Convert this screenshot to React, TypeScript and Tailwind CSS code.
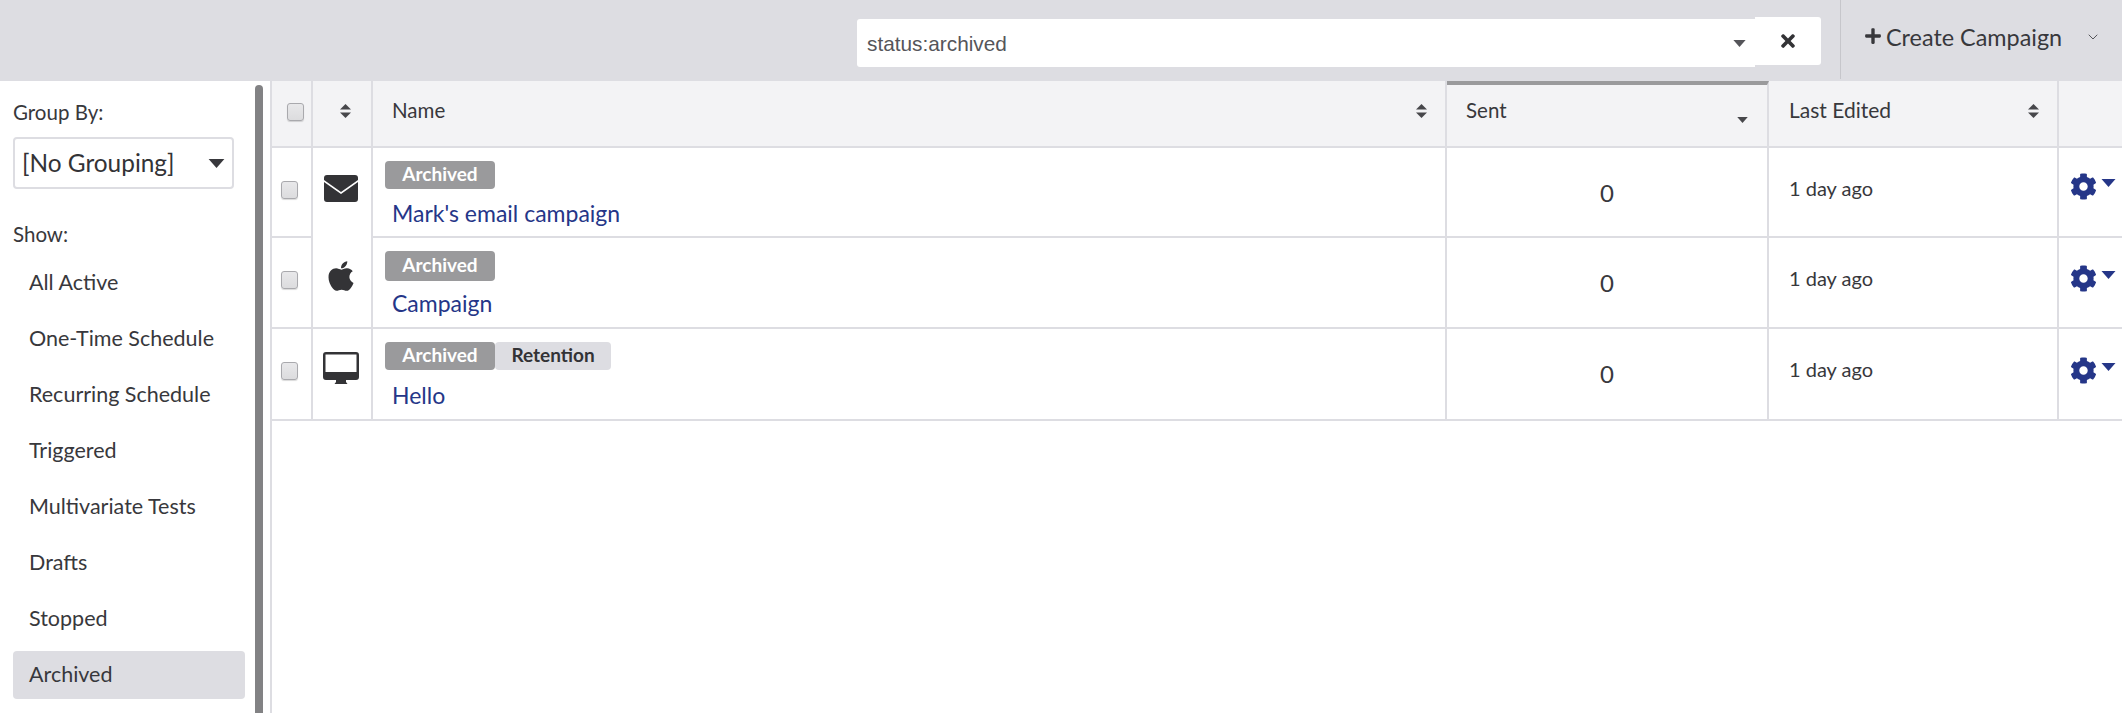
import { FaApple, FaCog, FaPlus, FaTimes } from "react-icons/fa";
import { FiChevronDown } from "react-icons/fi";
import type { ReactNode } from "react";

const navItems = [
  "All Active",
  "One-Time Schedule",
  "Recurring Schedule",
  "Triggered",
  "Multivariate Tests",
  "Drafts",
  "Stopped",
  "Archived",
];

function Envelope() {
  return (
    <svg viewBox="0 0 34 27" className="w-[34px] h-[27px]" fill="#333336">
      <path d="M3 0h28a3 3 0 0 1 3 3v2L17 17 0 5V3a3 3 0 0 1 3-3z" />
      <path d="M0 7l17 12L34 7v17a3 3 0 0 1-3 3H3a3 3 0 0 1-3-3z" />
    </svg>
  );
}

function Monitor() {
  return (
    <svg viewBox="0 0 36 32" className="w-[36px] h-[32px]" fill="#333336">
      <path
        fillRule="evenodd"
        d="M3 0h30a3 3 0 0 1 3 3v22a3 3 0 0 1-3 3H3a3 3 0 0 1-3-3V3a3 3 0 0 1 3-3zm-.5 2.500v17.500h31V2.500z"
      />
      <path d="M13 28h10v2l1.500 2h-13l1.500-2z" />
    </svg>
  );
}

function SortIcon() {
  return (
    <svg viewBox="0 0 11 14" className="w-[11px] h-[14px]" fill="#47474b">
      <path d="M5.500 0L11 5.500H0z" />
      <path d="M0 8.500h11L5.500 14z" />
    </svg>
  );
}

function Caret({ className }: { className: string }) {
  return (
    <svg viewBox="0 0 14 8" className={className} fill="currentColor">
      <path d="M0 0h14L7 8z" />
    </svg>
  );
}

function Checkbox() {
  return (
    <div className="w-[17px] h-[18px] rounded-[3px] border border-[#a9a9ad] bg-gradient-to-b from-[#e8e8ea] to-[#dcdcde] shadow-[0_1px_1px_rgba(0,0,0,0.15)]" />
  );
}

function Badge({ dark, children }: { dark?: boolean; children: ReactNode }) {
  return (
    <span
      className={`flex items-center justify-center rounded-[4px] h-full pb-[2px] text-[19px] font-bold ${
        dark ? "w-[110px] bg-[#9a9a9c] text-white" : "w-[116px] bg-[#dddde2] text-[#333336]"
      }`}
    >
      {children}
    </span>
  );
}

const rows = [
  {
    name: "Mark's email campaign",
    icon: <Envelope />,
    iconPad: "pt-[27px]",
    height: "h-[90px]",
    badgeHeight: "h-[28px]",
    linkGap: "mt-[10px]",
    gearPad: "pt-[25px]",
    openIcon: true,
    tags: false,
  },
  {
    name: "Campaign",
    icon: <FaApple className="w-[34px] h-[34px] text-[#333336]" />,
    iconPad: "pt-[21px]",
    height: "h-[91px]",
    badgeHeight: "h-[30px]",
    linkGap: "mt-[8px]",
    gearPad: "pt-[27px]",
    openIcon: false,
    tags: false,
  },
  {
    name: "Hello",
    icon: <Monitor />,
    iconPad: "pt-[23px]",
    height: "h-[92px]",
    badgeHeight: "h-[28px]",
    linkGap: "mt-[11px]",
    gearPad: "pt-[28px]",
    openIcon: false,
    tags: true,
  },
];

export default function App() {
  return (
    <div className="h-[713px] w-[2122px] overflow-hidden bg-white text-[#38383c] font-['Lato',sans-serif] flex flex-col">
      {/* Top bar */}
      <div className="h-[81px] shrink-0 bg-[#dddde2] flex justify-end">
        <div className="flex items-start pt-[17px]">
          <div className="mt-[2px] w-[898px] h-[48px] bg-white rounded-l-[3px] flex items-center justify-between pl-[10px] pr-[9px]">
            <span className="font-['Liberation_Sans',sans-serif] text-[20.8px] text-[#55555a] pt-[1px]">status:archived</span>
            <Caret className="w-[13px] h-[7px] text-[#55555a]" />
          </div>
          <div className="w-[66px] h-[48px] bg-white rounded-r-[3px] flex items-center justify-center">
            <FaTimes className="w-[18px] h-[20px] text-[#333336]" />
          </div>
        </div>
        <div className="ml-[19px] w-[282px] h-[79px] border-l border-[#c6c6cb] flex items-start pt-[23px] pl-[23px] text-[23.4px] text-[#38383c]">
          <FaPlus className="w-[18px] h-[18px] mt-[4px] mr-[4px]" />
          <span className="w-[199px] leading-[28px]">Create Campaign</span>
          <FiChevronDown strokeWidth={1.5} className="w-[16px] h-[16px] mt-[6px] text-[#55555a]" />
        </div>
      </div>

      <div className="flex flex-1 min-h-0">
        {/* Sidebar */}
        <div className="w-[255px] shrink-0 pl-[13px] pr-[10px]">
          <div className="pt-[19px] text-[20.5px] leading-[24px]">Group By:</div>
          <div className="mt-[13px] w-[221px] h-[52px] border-2 border-[#dddde2] rounded-[4px] flex items-center justify-between pl-[7px] pr-[7px] text-[24.4px] text-[#333336]">
            <span>[No Grouping]</span>
            <Caret className="w-[17px] h-[9px] text-[#38383c]" />
          </div>
          <div className="mt-[33px] text-[20.5px] leading-[24px]">Show:</div>
          <div className="mt-[8px] flex flex-col">
            {navItems.map((item) => (
              <div
                key={item}
                className={`shrink-0 pl-[16px] flex items-center text-[21.5px] rounded-[4px] ${
                  item === "Archived" ? "bg-[#dddde2] h-[48px] mt-[5px] pb-[2px]" : "h-[56px]"
                }`}
              >
                {item}
              </div>
            ))}
          </div>
        </div>
        <div className="w-[15px] shrink-0 pt-[4px] flex">
          <div className="w-[8px] h-full rounded-t-[4px] bg-[#828284]" />
        </div>

        {/* Table */}
        <div className="flex-1 min-w-0 border-l-2 border-[#dddde2] flex flex-col">
          <div className="h-[67px] shrink-0 bg-[#f3f3f5] border-b-2 border-[#dddde2] flex">
            <div className="w-[41px] shrink-0 border-r-2 border-[#dddde2] pt-[22px] pl-[15px]">
              <Checkbox />
            </div>
            <div className="w-[60px] shrink-0 border-r-2 border-[#dddde2] flex justify-center pt-[23px] pl-[9px] pr-[2px]">
              <SortIcon />
            </div>
            <div className="flex-1 border-r-2 border-[#dddde2] flex justify-between pl-[19px] pr-[18px] pt-[17px]">
              <span className="text-[20.5px] leading-[24px]">Name</span>
              <div className="pt-[6px]">
                <SortIcon />
              </div>
            </div>
            <div className="w-[322px] shrink-0 border-r-2 border-[#dddde2] border-t-4 border-t-[#9a9a9c] flex justify-between pl-[19px] pr-[19px] pt-[13px]">
              <span className="text-[20.5px] leading-[24px]">Sent</span>
              <Caret className="w-[11px] h-[6px] mt-[19px] text-[#47474b]" />
            </div>
            <div className="w-[290px] shrink-0 border-r-2 border-[#dddde2] flex justify-between pl-[20px] pr-[18px] pt-[17px]">
              <span className="text-[21px] leading-[24px]">Last Edited</span>
              <div className="pt-[6px]">
                <SortIcon />
              </div>
            </div>
            <div className="w-[63px] shrink-0" />
          </div>

          {rows.map((row) => (
            <div key={row.name} className={`${row.height} shrink-0 flex`}>
              <div className="w-[41px] shrink-0 border-r-2 border-b-2 border-[#dddde2] pt-[33px] pl-[9px]">
                <Checkbox />
              </div>
              <div
                className={`w-[60px] shrink-0 border-r-2 border-[#dddde2] flex justify-center pr-[2px] ${row.iconPad} ${
                  row.openIcon ? "" : "border-b-2"
                }`}
              >
                <div>{row.icon}</div>
              </div>
              <div className="flex-1 border-r-2 border-b-2 border-[#dddde2] pt-[13px] pl-[12px]">
                <div className={`flex ${row.badgeHeight}`}>
                  <Badge dark>Archived</Badge>
                  {row.tags && <Badge>Retention</Badge>}
                </div>
                <div className={`${row.linkGap} pl-[7px] text-[23px] leading-[28px] text-[#253688]`}>{row.name}</div>
              </div>
              <div className="w-[322px] shrink-0 border-r-2 border-b-2 border-[#dddde2] flex justify-center pt-[31px] text-[24px] leading-[28px]">
                0
              </div>
              <div className="w-[290px] shrink-0 border-r-2 border-b-2 border-[#dddde2] pl-[20px] pt-[27px] text-[20px] leading-[26px]">
                1 day ago
              </div>
              <div className={`w-[63px] shrink-0 border-b-2 border-[#dddde2] pl-[11px] flex items-start text-[#253688] ${row.gearPad}`}>
                <FaCog className="w-[27px] h-[27px]" />
                <Caret className="w-[15px] h-[8px] mt-[6px] ml-[4px]" />
              </div>
            </div>
          ))}
        </div>
      </div>
    </div>
  );
}
